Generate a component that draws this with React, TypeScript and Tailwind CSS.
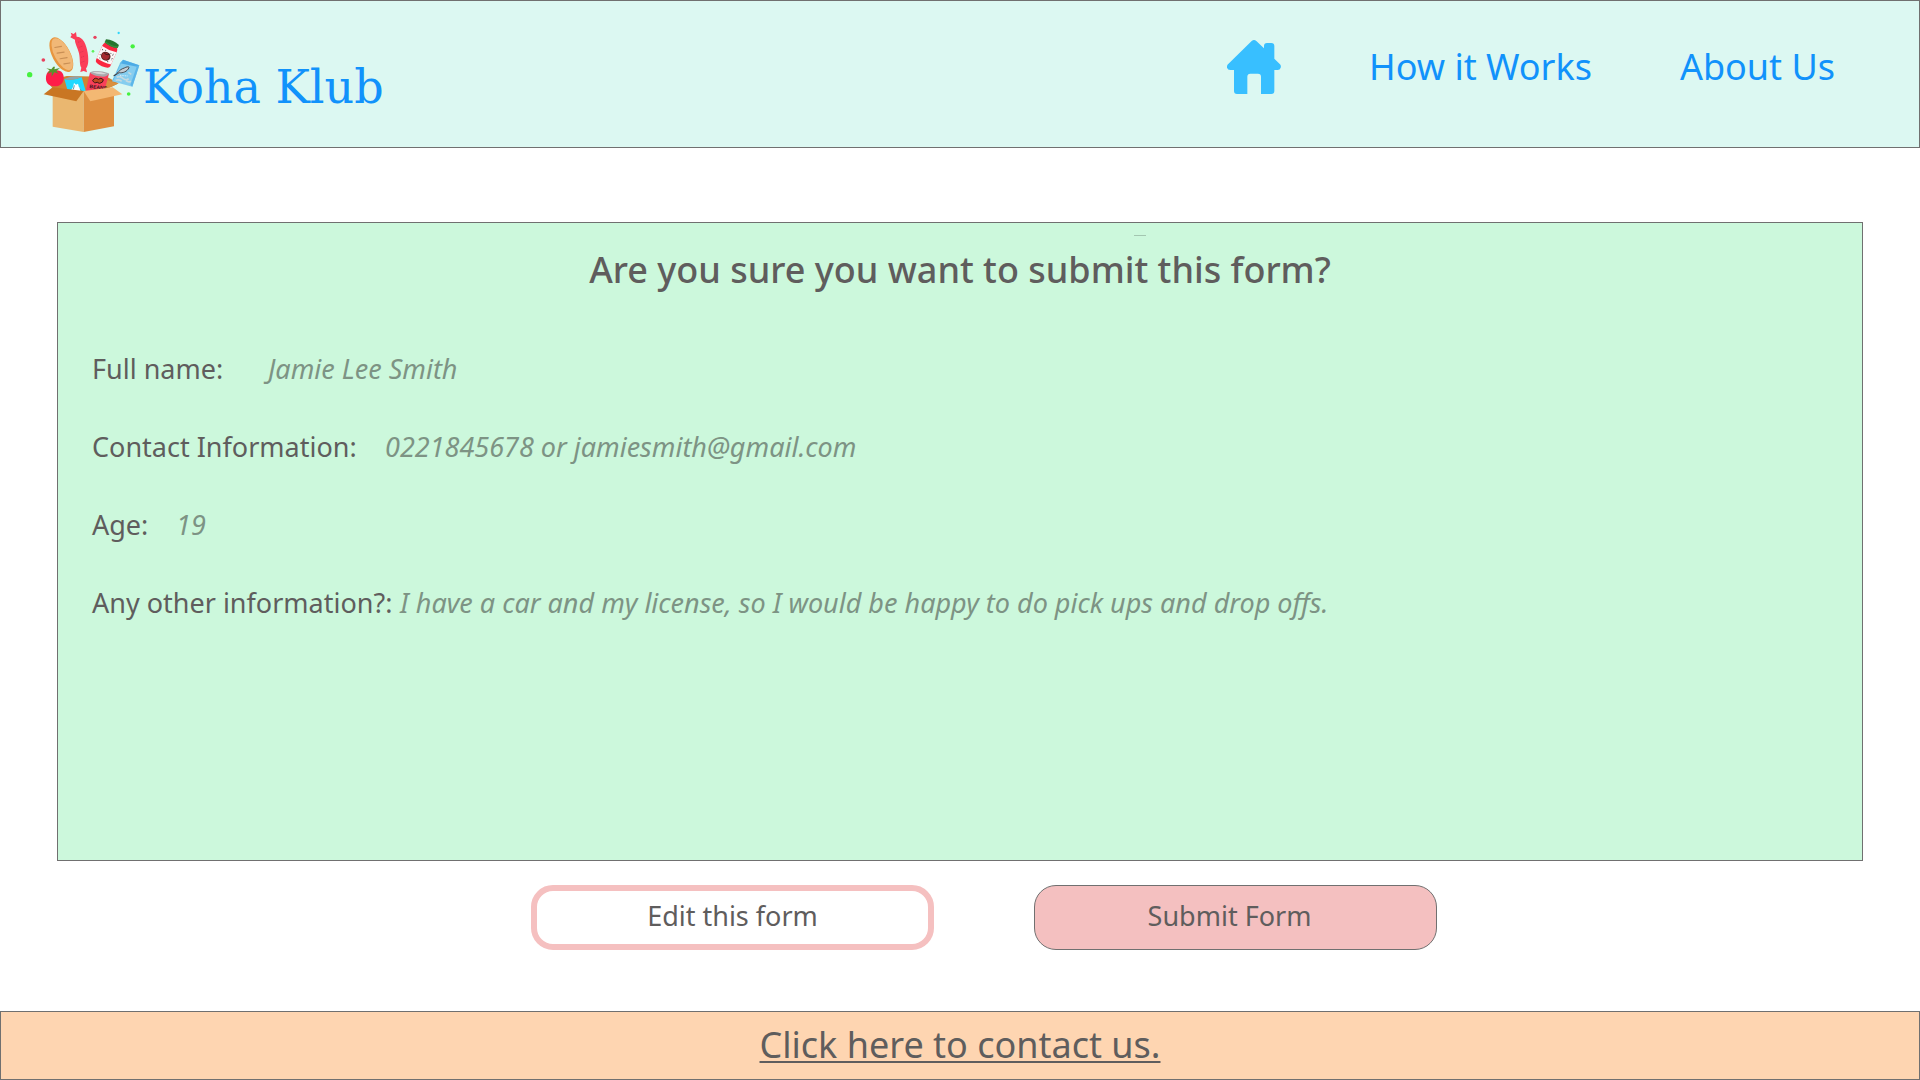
type Field = { label: string; value: string; labelWidth: string };

const fields: Field[] = [
  { label: 'Full name:', value: 'Jamie Lee Smith', labelWidth: 'min-w-[176px]' },
  { label: 'Contact Information:', value: '0221845678 or jamiesmith@gmail.com', labelWidth: 'min-w-[293px]' },
  { label: 'Age:', value: '19', labelWidth: 'min-w-[84px]' },
  {
    label: 'Any other information?:',
    value: 'I have a car and my license, so I would be happy to do pick ups and drop offs.',
    labelWidth: 'min-w-[308px]',
  },
];

function GroceryBoxLogo() {
  return (
    <svg viewBox="0 0 390 360" className="h-[120px] w-[130px] shrink-0" aria-hidden="true">
      {/* confetti */}
      <circle cx="29" cy="164" r="8" fill="#45f13f" />
      <circle cx="338" cy="79" r="6.5" fill="#45f13f" />
      <circle cx="326" cy="222" r="5.5" fill="#45f13f" />
      <circle cx="219" cy="94" r="4" fill="#5cf158" />
      <circle cx="70" cy="120" r="5.5" fill="#e8425e" />
      <circle cx="225" cy="52" r="5" fill="#e8425e" />
      <circle cx="296" cy="39" r="3.5" fill="#2fd6fb" />
      {/* box interior */}
      <path d="M98 205 L80 184 L140 168 L260 170 L296 190 L262 206 L191 216 Z" fill="#cf8232" />
      <path d="M236 183 L258 179 L294 191 L266 204 Z" fill="#d9903f" />
      {/* bread */}
      <g transform="rotate(-28 124 104)">
        <ellipse cx="124" cy="104" rx="27" ry="57" fill="#e8963f" />
        <ellipse cx="127" cy="104" rx="23" ry="53" fill="#f1b877" />
        <g stroke="#c98f55" strokeWidth="3.5" strokeLinecap="round">
          <path d="M117 76 L136 82" />
          <path d="M115 94 L135 101" />
          <path d="M115 113 L135 120" />
          <path d="M118 132 L135 138" />
        </g>
      </g>
      {/* sausage */}
      <path d="M170 50 C190 50 199 74 203 98 C207 124 204 138 198 145 L201 157 L191 153 L181 156 L184 143 C178 136 181 119 177 100 C173 82 164 70 165 59 L151 52 L155 46 L152 38 L161 42 L168 36 Z" fill="#fb3e58" />
      <path d="M174 67 L182 64 M178 82 L188 78 M181 97 L192 93 M183 112 L194 108 M184 127 L195 123" stroke="#d93450" strokeWidth="2.5" strokeDasharray="4 2" />
      {/* jam jar */}
      <g transform="translate(262 101) rotate(24) scale(1.12 1) translate(-264 -98)">
        <path d="M243 82 Q243 69 253 67 H275 Q285 69 285 82 V129 Q285 138 264 139 Q243 138 243 129 Z" fill="#fa2740" />
        <path d="M243 83 Q264 88 285 83 V123 Q264 129 243 123 Z" fill="#fcf7f7" />
        <path d="M247 91 l3 5 m5 -6 l3 3 m13 -1 l4 3 m4 -4 v7 M247 108 l2 4 m0 7 l5 2 m18 -1 l5 -2 m4 -14 v7" stroke="#333" strokeWidth="2" strokeDasharray="3 2" />
        <circle cx="263" cy="107" r="13" fill="#5d2424" />
        <circle cx="262" cy="107" r="10" fill="#a52a30" />
        <path d="M255 99 q8 6 15 -2" stroke="#411b1b" strokeWidth="3" fill="none" />
        <path d="M245 60 Q264 52 283 60 V70 Q264 77 245 70 Z" fill="#26742e" />
        <path d="M245 65 Q264 74 283 64 V70 Q264 77 245 70 Z" fill="#378b3b" />
      </g>
      {/* frozen fish packet */}
      <path d="M309 119 L358 136 L337 200 L276 184 Z" fill="#85cdef" />
      <path d="M309 119 L358 136 L351 140 L300 130 Z" fill="#4cabe6" />
      <path d="M358 136 L337 200 L331 195 L350 140 Z" fill="#5cb6e9" />
      <path d="M276 184 L300 130 L309 119 L282 178 Z" fill="#63bdea" />
      <path d="M290 172 q10 -6 19 3 q10 8 17 1 M287 181 q11 -4 18 3 M318 182 q8 6 15 2 M325 157 l9 6" stroke="#c5d9df" strokeWidth="5" fill="none" />
      <path d="M281 167 C294 161 296 149 313 144 C320 140 328 139 327 143 C322 155 307 160 298 158 C292 160 289 166 281 167 Z" fill="#c4ccd2" stroke="#31343b" strokeWidth="2.5" />
      <path d="M300 166 l23 2" stroke="#e6f5ff" strokeWidth="2.5" strokeDasharray="3 2" />
      {/* milk tin */}
      <path d="M133 177 Q158 184 185 171 L198 216 L145 220 Z" fill="#20d9ff" />
      <path d="M133 177 Q156 165 185 171 Q159 184 133 177 Z" fill="#8fa4ac" />
      <path d="M151 213 Q159 206 162 189 L168 194 L174 191 Q175 203 183 208 L182 217 Z" fill="#fcffff" />
      <path d="M163 196 l-3 12 M180 205 l3 8" stroke="#16657b" strokeWidth="2" />
      {/* beans tin */}
      <path d="M210 157 Q237 171 267 161 L253 213 L196 218 Z" fill="#f9405a" />
      <path d="M210 157 Q230 147 267 160 Q262 174 237 169 Q216 166 210 157 Z" fill="#a9a8ac" />
      <path d="M216 157 Q235 152 259 161 Q239 166 216 157 Z" fill="#d7d6d8" />
      <path d="M218 181 q8 -11 17 -3 q8 -7 15 1 q0 9 -11 11 q-7 -1 -7 -4 q-9 7 -14 -5" fill="#c4491f" stroke="#3d1716" strokeWidth="3" />
      <text x="208" y="204" transform="rotate(6 208 204)" fill="#3b1619" fontSize="15" fontWeight="700" fontFamily="Liberation Sans, sans-serif">BEANS</text>
      {/* tomato */}
      <path d="M78 171 C80 151 94 148 105 151 C124 148 133 162 131 177 C129 193 117 200 102 199 C86 198 76 188 78 171 Z" fill="#ff1c49" />
      <path d="M100 140 L105 140 L103 148 L120 144 L109 153 L116 161 L103 157 L95 170 L95 156 L83 161 L89 151 L79 145 L94 148 Z" fill="#56942c" />
      {/* box front */}
      <path d="M98 221 L191 213 V336 L98 320 Z" fill="#eab770" />
      <path d="M191 213 L282 215 V319 L191 336 Z" fill="#de8f41" />
      <path d="M98 202 L191 213 L169 244 L71 223 Z" fill="#c97623" />
      <path d="M191 213 L278 202 L307 223 L211 244 Z" fill="#f3b873" />
    </svg>
  );
}

function HomeIcon() {
  return (
    <svg viewBox="18 18 162 162" className="h-[54px] w-[54px]" fill="#38bfff" aria-hidden="true">
      <path d="M92 21 Q99 15 106 21 L129 43 V36 Q129 27 138 27 H151 Q160 27 160 36 V74 L177 91 Q181 96 179 101 Q177 108 170 108 H160 V171 Q160 180 151 180 H120 V128 Q120 119 111 119 H88 Q79 119 79 128 V180 H48 Q39 180 39 171 V108 H28 Q20 108 18 101 Q17 95 21 91 Z" />
    </svg>
  );
}

export default function App() {
  return (
    <div className="flex min-h-screen flex-col bg-white font-['Noto_Sans',sans-serif] text-[#5f5d5d]">
      <header className="flex h-[148px] items-start justify-between border border-[#707070] bg-[#dcf8f2] pr-[84px] pl-[19px]">
        <a href="#home" className="flex items-start pt-[19px] text-[#1192fb]">
          <GroceryBoxLogo />
          <span className="-ml-[7px] pt-[37px] font-['DejaVu_Serif',serif] text-[46px] leading-[60px]">Koha Klub</span>
        </a>
        <nav className="flex items-center gap-[88px] pt-[39px] text-[36px] leading-[54px] text-[#1192fb]">
          <a href="#home" aria-label="Home">
            <HomeIcon />
          </a>
          <a href="#how-it-works">How it Works</a>
          <a href="#about">About Us</a>
        </nav>
      </header>

      <main className="flex flex-1 flex-col px-[57px] pt-[74px]">
        <section className="relative min-h-[639px] border border-[#707070] bg-[#ccf8dc] px-[34px] pt-[20px]">
          <span className="absolute top-[12px] left-[1076px] h-px w-[12px] bg-[#a3c6b0]" />
          <h1 className="text-center text-[36px] leading-[54px] font-medium">Are you sure you want to submit this form?</h1>
          <dl className="mt-[52px] flex flex-col gap-[38px] text-[27px] leading-[40px]">
            {fields.map((field) => (
              <div key={field.label} className="flex items-baseline">
                <dt className={field.labelWidth}>{field.label}</dt>
                <dd className="text-[#7d9384] italic">{field.value}</dd>
              </div>
            ))}
          </dl>
        </section>

        <div className="mt-[24px] ml-[48px] flex justify-center gap-[100px] text-[27px]">
          <button type="button" className="h-[65px] w-[403px] rounded-[22px] border-6 border-[#f5c0c0] bg-white pb-[3px]">
            Edit this form
          </button>
          <button type="button" className="h-[65px] w-[403px] rounded-[22px] border border-[#707070] bg-[#f4c0c0] pr-[12px] pb-[3px]">
            Submit Form
          </button>
        </div>
      </main>

      <footer className="flex h-[69px] items-start justify-center border border-[#707070] bg-[#fed5b1] pt-[6px] text-[36px] leading-[54px]">
        <a href="#contact" className="underline decoration-2 underline-offset-[3px] [text-decoration-skip-ink:none]">
          Click here to contact us.
        </a>
      </footer>
    </div>
  );
}
